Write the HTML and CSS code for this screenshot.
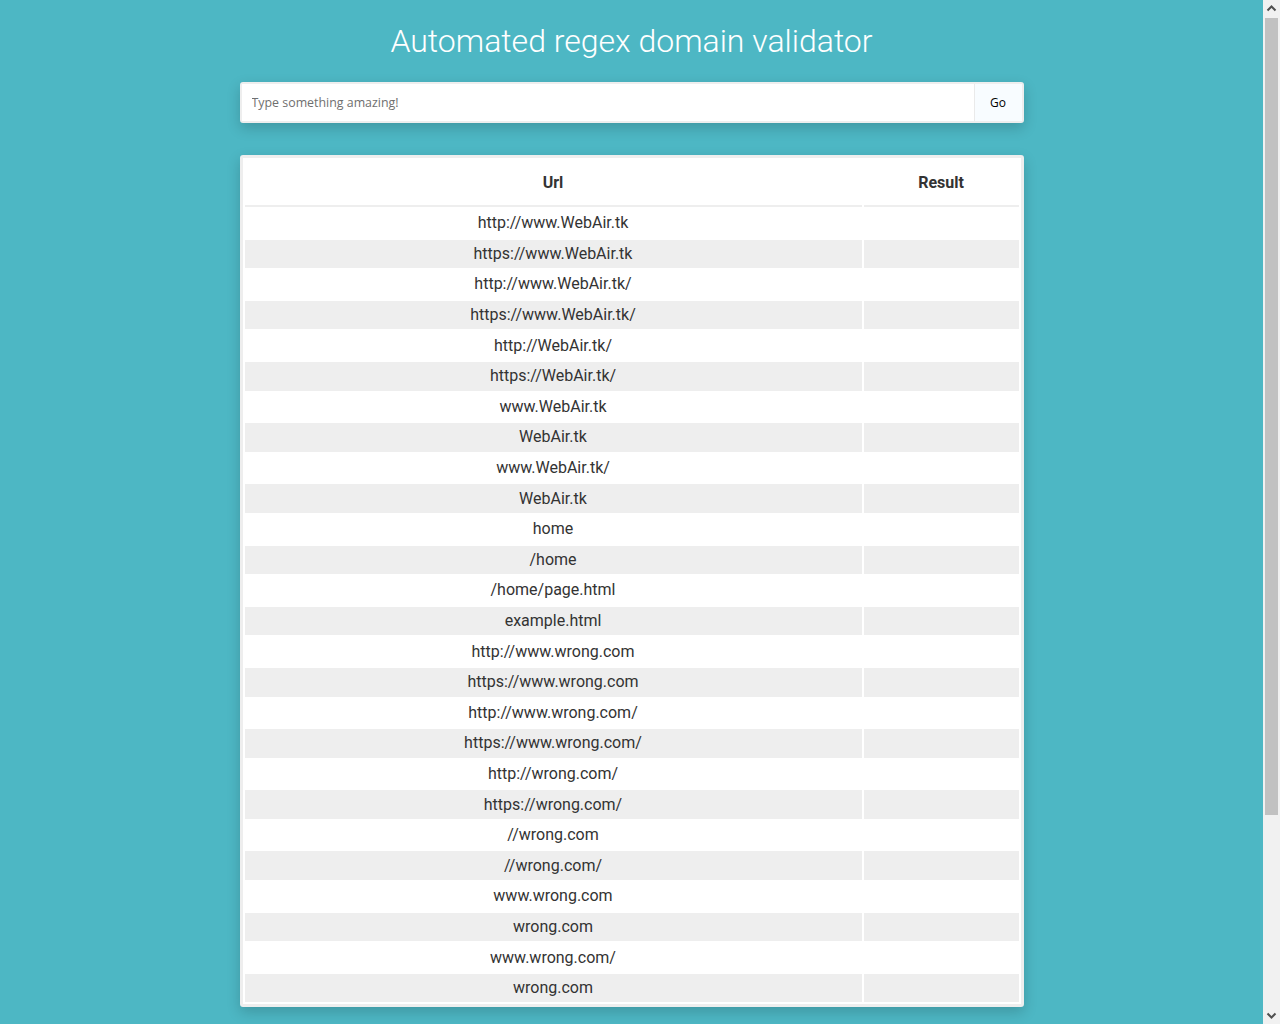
FILE: index.html
```html
<!DOCTYPE html>
<html lang="en">
<head>
<meta charset="utf-8">
<title>Automated regex domain validator</title>
<link rel="stylesheet" href="styles.css">
</head>
<body>
<main class="wrap">
  <h1 class="title">Automated regex domain validator</h1>
  <form class="search" onsubmit="return false;">
    <input class="search-input" type="text" placeholder="Type something amazing!">
    <button class="search-btn" type="submit">Go</button>
  </form>
  <section class="card">
    <table class="results">
      <thead>
        <tr><th class="col-url">Url</th><th class="col-res">Result</th></tr>
      </thead>
      <tbody>
        <tr><td>http://www.WebAir.tk</td><td></td></tr>
        <tr><td>https://www.WebAir.tk</td><td></td></tr>
        <tr><td>http://www.WebAir.tk/</td><td></td></tr>
        <tr><td>https://www.WebAir.tk/</td><td></td></tr>
        <tr><td>http://WebAir.tk/</td><td></td></tr>
        <tr><td>https://WebAir.tk/</td><td></td></tr>
        <tr><td>www.WebAir.tk</td><td></td></tr>
        <tr><td>WebAir.tk</td><td></td></tr>
        <tr><td>www.WebAir.tk/</td><td></td></tr>
        <tr><td>WebAir.tk</td><td></td></tr>
        <tr><td>home</td><td></td></tr>
        <tr><td>/home</td><td></td></tr>
        <tr><td>/home/page.html</td><td></td></tr>
        <tr><td>example.html</td><td></td></tr>
        <tr><td>http://www.wrong.com</td><td></td></tr>
        <tr><td>https://www.wrong.com</td><td></td></tr>
        <tr><td>http://www.wrong.com/</td><td></td></tr>
        <tr><td>https://www.wrong.com/</td><td></td></tr>
        <tr><td>http://wrong.com/</td><td></td></tr>
        <tr><td>https://wrong.com/</td><td></td></tr>
        <tr><td>//wrong.com</td><td></td></tr>
        <tr><td>//wrong.com/</td><td></td></tr>
        <tr><td>www.wrong.com</td><td></td></tr>
        <tr><td>wrong.com</td><td></td></tr>
        <tr><td>www.wrong.com/</td><td></td></tr>
        <tr><td>wrong.com</td><td></td></tr>
      </tbody>
    </table>
  </section>
</main>
<div class="scrollbar" aria-hidden="true">
  <svg class="sb-arrow" width="17" height="17" viewBox="0 0 17 17"><path d="M4.5 10.5 L8.5 6.5 L12.5 10.5" fill="none" stroke="#505050" stroke-width="2"/></svg>
  <div class="sb-track"><div class="sb-thumb"></div></div>
  <svg class="sb-arrow" width="17" height="17" viewBox="0 0 17 17"><path d="M4.5 6.5 L8.5 10.5 L12.5 6.5" fill="none" stroke="#505050" stroke-width="2"/></svg>
</div>
</body>
</html>
```

FILE: styles.css
```css
html, body {
  margin: 0;
  padding: 0;
}
body {
  background: #4db7c4;
  font-family: Roboto, "Liberation Sans", sans-serif;
  color: #333;
  min-height: 1270px;
  padding-right: 17px;
}
.wrap {
  width: 784px;
  margin: 0 auto;
  padding-bottom: 260px;
}
.title {
  margin: 0;
  padding-top: 21px;
  height: 61px;
  box-sizing: border-box;
  font-family: Roboto, sans-serif;
  font-weight: 300;
  font-size: 32px;
  line-height: 40px;
  color: #fff;
  text-align: center;
}
.search {
  margin: 21px 0 0;
  display: flex;
  height: 41px;
  box-sizing: border-box;
  border: 2px solid #eeeeee;
  border-radius: 3px;
  background: #fff;
  box-shadow: 0 5px 14px rgba(0, 0, 0, 0.18);
}
.search-input {
  flex: 1;
  border: 0;
  outline: none;
  padding: 0 10px;
  font-family: "Open Sans", sans-serif;
  font-size: 12.4px;
  color: #333;
  background: #fff;
}
.search-input::placeholder {
  color: #6f6f6f;
}
.search-btn {
  width: 48px;
  border: 0;
  border-left: 1px solid #eaeaea;
  background: #f8fcff;
  font-family: "Open Sans", sans-serif;
  font-size: 12px;
  color: #000;
  padding: 0;
}
.card {
  margin-top: 32px;
  border: 3px solid #eeeeee;
  border-radius: 3px;
  background: #fff;
  box-shadow: 0 5px 14px rgba(0, 0, 0, 0.18);
}
.results {
  width: 100%;
  border-spacing: 2px;
  border-collapse: separate;
}
.results th {
  height: 45px;
  padding: 0;
  border-bottom: 2px solid #eeeeee;
  font-weight: 700;
  font-size: 16px;
  color: #333;
  text-align: center;
}
.col-res {
  width: 155px;
}
.results td {
  padding: 2.3px 0;
  font-size: 16px;
  line-height: 24px;
  color: #333;
  text-align: center;
}
.results tbody tr:nth-child(even) td {
  background: #eeeeee;
}

/* decorative window scrollbar, overlaid on the right edge */
.scrollbar {
  position: fixed;
  top: 0;
  right: 0;
  bottom: 0;
  width: 17px;
  background: #f1f1f1;
  display: flex;
  flex-direction: column;
}
.sb-arrow {
  display: block;
  flex: none;
}
.sb-track {
  flex: 1;
  padding: 1px 2px 0;
}
.sb-thumb {
  height: 797px;
  background: #c1c1c1;
}
```
